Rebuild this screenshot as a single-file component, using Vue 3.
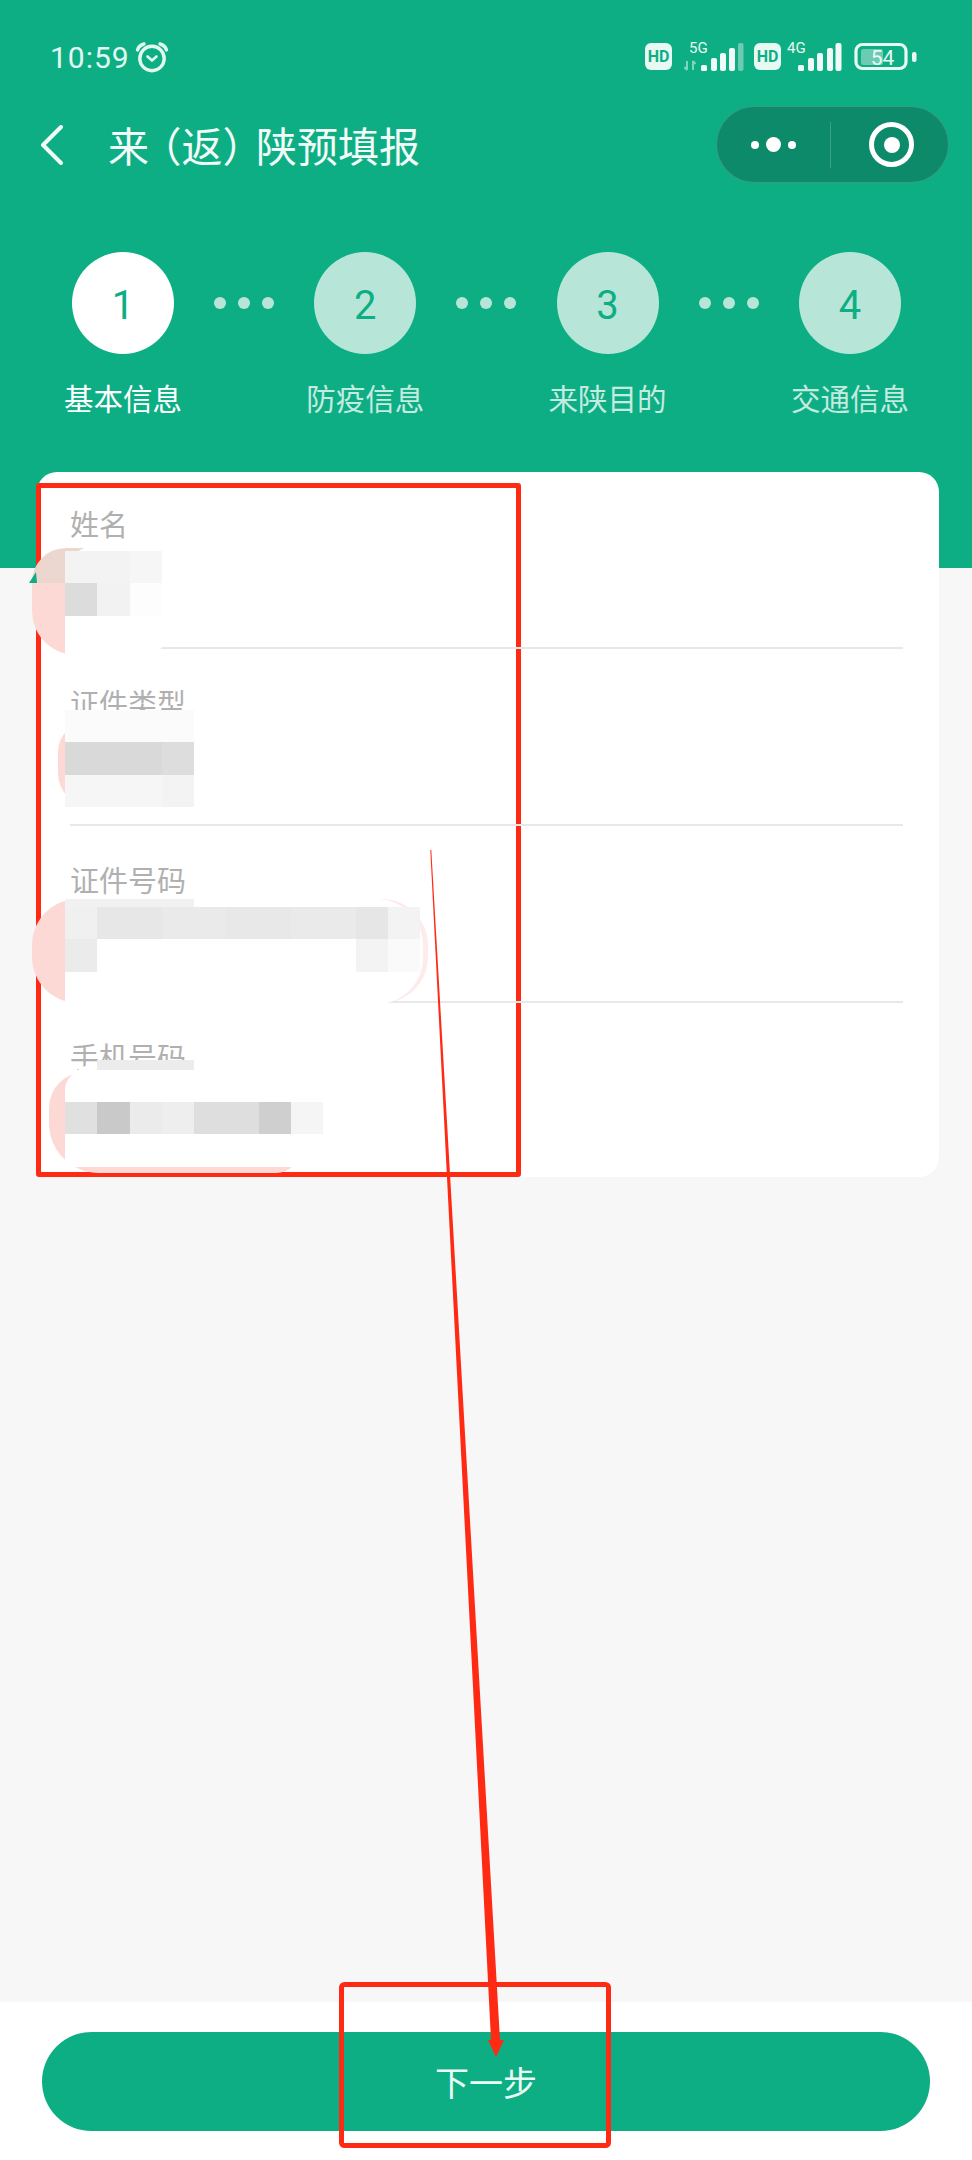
<script setup>
const steps = [
  { n: 1, label: '基本信息' },
  { n: 2, label: '防疫信息' },
  { n: 3, label: '来陕目的' },
  { n: 4, label: '交通信息' }
]

const t = 32.3

// mosaic rows laid over each field value, widths are in tiles
const fields = [
  {
    label: '姓名',
    mask: 'm1',
    rows: [
      { tiles: [['#f3f3f3', 2], ['#f6f6f6', 1]] },
      { tiles: [['#dcdcdc', 1], ['#f2f2f2', 1], ['#fdfdfd', 1]] }
    ]
  },
  {
    label: '证件类型',
    mask: 'm2',
    rows: [
      { tiles: [['#fbfbfb', 4]] },
      { tiles: [['#d9d9d9', 3], ['#dddddd', 1]] },
      { tiles: [['#f6f6f6', 3], ['#f3f3f3', 1]] }
    ]
  },
  {
    label: '证件号码',
    mask: 'm3',
    rows: [
      { h: 8, tiles: [['#f1f1f1', 4]] },
      { tiles: [['#f0f0f0', 1], ['#e7e7e7', 2], ['#eaeaea', 2], ['#e8e8e8', 2], ['#eaeaea', 2], ['#e6e6e6', 1], ['#f3f3f3', 1]] },
      { tiles: [['#ebebeb', 1], ['#ffffff', 8], ['#f3f3f3', 1], ['#fafafa', 1]] }
    ]
  },
  {
    label: '手机号码',
    mask: 'm4',
    rows: [
      { h: 10, tiles: [['transparent', 1], ['#ececec', 3]] },
      { h: 32, tiles: [] },
      { tiles: [['#e0e0e0', 1], ['#c9c9c9', 1], ['#ebebeb', 1], ['#eeeeee', 1], ['#dedede', 2], ['#cfcfcf', 1], ['#f5f5f5', 1]] }
    ]
  }
]
</script>

<template>
  <div class="page">
    <header class="header">
      <div class="status">
        <span class="time">10:59</span>
        <svg class="alarm" width="34" height="32" viewBox="0 0 34 32" fill="none" stroke="#e3f7f1" stroke-width="3.4" stroke-linecap="round" stroke-linejoin="round">
          <circle cx="17" cy="17.5" r="12.2" />
          <path d="M2.5 9 A9 9 0 0 1 9 3" />
          <path d="M25 3 A9 9 0 0 1 31.5 9" />
          <path d="M12.5 15.5 L17 19.5 L21.5 15.5" stroke-width="2.6" />
        </svg>
        <svg class="signal" width="272" height="36" viewBox="0 -3 272 36">
          <rect x="0" y="1" width="27" height="27" rx="6" fill="#e8f8f3" />
          <text x="13.5" y="20" class="hd">HD</text>
          <text x="44" y="11" class="net">5G</text>
          <path d="M42 19v9M39.5 25l2.5 3M48 28v-9M48 19l2.5 3" stroke="#7fd4bc" stroke-width="2" fill="none" />
          <rect x="56" y="23" width="6" height="6" rx="1.5" fill="#f0fbf8" />
          <rect x="66" y="16" width="6" height="13" rx="2" fill="#f0fbf8" />
          <rect x="75" y="11" width="6" height="18" rx="2" fill="#f0fbf8" />
          <rect x="84" y="6" width="6" height="23" rx="2" fill="#f0fbf8" />
          <rect x="93" y="1" width="5.5" height="28" rx="2" fill="#6ccbb1" />
          <rect x="109" y="1" width="27" height="27" rx="6" fill="#e8f8f3" />
          <text x="122.5" y="20" class="hd">HD</text>
          <text x="142" y="11" class="net">4G</text>
          <rect x="153" y="23" width="6" height="6" rx="1.5" fill="#f0fbf8" />
          <rect x="163" y="16" width="6" height="13" rx="2" fill="#f0fbf8" />
          <rect x="172" y="11" width="6" height="18" rx="2" fill="#f0fbf8" />
          <rect x="182" y="6" width="6" height="23" rx="2" fill="#f0fbf8" />
          <rect x="190.5" y="1" width="6" height="28" rx="2" fill="#f0fbf8" />
          <rect x="211" y="2.5" width="50" height="24" rx="6.5" fill="none" stroke="#e8f8f3" stroke-width="3.2" />
          <rect x="216" y="7" width="22" height="16" rx="2.5" fill="#6ccbb1" />
          <text x="237.5" y="22.5" class="batt">54</text>
          <rect x="267" y="10" width="4.5" height="10" rx="2" fill="#e8f8f3" />
        </svg>
      </div>

      <div class="nav">
        <svg class="back" width="23" height="40" viewBox="0 0 23 40" fill="none" stroke="#f2fbf8" stroke-width="4" stroke-linecap="round" stroke-linejoin="round">
          <path d="M21 2 L3 20 L21 38" />
        </svg>
        <h1 class="title">来<span class="paren-l">（</span>返<span class="paren-r">）</span>陕预填报</h1>
        <div class="capsule">
          <div class="more">
            <i class="dot"></i>
            <i class="dot big"></i>
            <i class="dot"></i>
          </div>
          <span class="sep"></span>
          <div class="target">
            <i class="core"></i>
          </div>
        </div>
      </div>

      <div class="steps">
        <template v-for="(s, i) in steps" :key="s.n">
          <div class="dots" v-if="i > 0">
            <i></i><i></i><i></i>
          </div>
          <div class="step" :class="{ active: i === 0 }">
            <div class="num">{{ s.n }}</div>
            <div class="step-label">{{ s.label }}</div>
          </div>
        </template>
      </div>
    </header>

    <section class="card">
      <div class="frame"></div>
      <div class="row" v-for="f in fields" :key="f.label">
        <div class="label">{{ f.label }}</div>
        <div class="mask" :class="f.mask">
          <div class="blob"></div>
          <div class="paper"></div>
          <div class="tiles">
            <div
              class="tile-row"
              v-for="(r, ri) in f.rows"
              :key="ri"
              :style="{ height: (r.h || t) + 'px' }"
            >
              <i
                v-for="(c, ci) in r.tiles"
                :key="ci"
                :style="{ background: c[0], width: c[1] * t + 'px' }"
              ></i>
            </div>
          </div>
        </div>
      </div>
    </section>

    <footer class="footer">
      <button class="next">下一步</button>
    </footer>

    <!-- red marks someone drew on top of the screenshot -->
    <svg class="marks" width="972" height="2160" viewBox="0 0 972 2160">
      <polygon points="29,583 36,572 37,583" fill="#0eae84" />
      <polygon points="430.3,850 431.3,850 500,2040 504,2040 496,2057 488,2040 491,2040" fill="#ff2a14" />
      <rect x="341.5" y="1984.5" width="267" height="161" rx="3" fill="none" stroke="#ff2a14" stroke-width="5" />
    </svg>
  </div>
</template>

<style scoped>
.page {
  position: relative;
  display: flex;
  flex-direction: column;
  width: 972px;
  height: 2160px;
  overflow: hidden;
  background: #f7f7f7;
  font-family: "Noto Sans CJK SC", "Liberation Sans", sans-serif;
}

.header {
  box-sizing: border-box;
  height: 568px;
  padding-top: 42px;
  background: #0eae84;
}

.status {
  display: flex;
  align-items: center;
  height: 30px;
  padding: 0 55px 0 50px;
}

.time {
  font-family: Roboto, sans-serif;
  font-size: 30px;
  letter-spacing: 1px;
  color: #e3f7f1;
}

.alarm {
  margin-left: 5px;
}

.signal {
  margin-left: auto;
}

.hd {
  font-family: Roboto, sans-serif;
  font-size: 16px;
  font-weight: 700;
  fill: #0eae84;
  text-anchor: middle;
}

.net {
  font-family: Roboto, sans-serif;
  font-size: 15px;
  fill: #e8f8f3;
}

.batt {
  font-family: Roboto, sans-serif;
  font-size: 21px;
  fill: #e8f8f3;
  text-anchor: middle;
}

.nav {
  display: flex;
  align-items: center;
  height: 77px;
  margin-top: 34px;
  padding: 0 23px 0 40px;
}

.title {
  margin: 0 0 0 45px;
  font-size: 41px;
  font-weight: 400;
  line-height: 77px;
  color: #f2fbf8;
}

/* half-width brackets, the gaps round them come from margins */
.paren-l,
.paren-r {
  font-feature-settings: "halt";
}

.paren-l {
  margin-left: 12px;
}

.paren-r {
  margin-right: 13px;
}

.capsule {
  box-sizing: border-box;
  display: flex;
  align-items: center;
  width: 233px;
  height: 77px;
  margin-left: auto;
  border: 1px solid rgba(255, 255, 255, 0.16);
  border-radius: 39px;
  background: #0c8a69;
}

.more {
  display: flex;
  flex: 1;
  align-items: center;
  justify-content: center;
  gap: 7px;
}

.dot {
  width: 8px;
  height: 8px;
  border-radius: 50%;
  background: #fff;
}

.dot.big {
  width: 15px;
  height: 15px;
}

.sep {
  width: 1px;
  height: 46px;
  background: rgba(255, 255, 255, 0.2);
}

.target {
  position: relative;
  display: flex;
  flex: 1;
  align-items: center;
  justify-content: center;
  padding-left: 4px;
}

.target::before {
  content: "";
  box-sizing: border-box;
  width: 45px;
  height: 45px;
  border: 5.5px solid #fff;
  border-radius: 50%;
}

.core {
  position: absolute;
  top: 50%;
  left: 50%;
  width: 16px;
  height: 16px;
  margin: -8px 0 0 -6px;
  border-radius: 50%;
  background: #fff;
}

.steps {
  display: flex;
  margin-top: 69px;
  padding-left: 58px;
}

.step {
  display: flex;
  flex-direction: column;
  align-items: center;
  width: 130px;
}

.num {
  width: 102px;
  height: 102px;
  border-radius: 50%;
  background: #b7e6d9;
  font-family: Roboto, sans-serif;
  font-size: 40px;
  line-height: 108px;
  text-align: center;
  color: #0eae84;
}

.step.active .num {
  background: #fff;
}

.step-label {
  margin-top: 23px;
  font-size: 29.5px;
  line-height: 40px;
  white-space: nowrap;
  color: #c4ebe0;
}

.step.active .step-label {
  color: #fff;
}

.dots {
  display: flex;
  align-items: center;
  justify-content: center;
  gap: 12px;
  width: 112.3px;
  height: 102px;
}

.dots i {
  width: 12px;
  height: 12px;
  border-radius: 50%;
  background: #b7e6d9;
}

.card {
  position: relative;
  flex: none;
  width: 902px;
  height: 705px;
  margin: -96px 0 0 37px;
  border-radius: 20px;
  background: #fff;
}

.frame {
  position: absolute;
  top: 11px;
  left: -1px;
  box-sizing: border-box;
  width: 485px;
  height: 694px;
  border: 5px solid #ff2a14;
  border-radius: 3px;
}

.row {
  position: relative;
  box-sizing: border-box;
  height: 177px;
  margin: 0 36px 0 33px;
  padding-top: 33px;
  border-bottom: 2px solid #e8e8e8;
}

.row:nth-child(2) {
  padding-top: 31px;
}

.row:last-child {
  border-bottom: 0;
}

.label {
  font-size: 29px;
  line-height: 40px;
  color: #b0b0b0;
}

.mask {
  position: absolute;
  left: -5px;
}

.blob {
  position: absolute;
  background: #fdd9d6;
}

.paper {
  position: absolute;
  inset: 0;
  background: #fff;
}

.tiles {
  position: relative;
}

.tile-row {
  display: flex;
}

.m1 {
  top: 74px;
  width: 107px;
  height: 121px;
}

.m1 .tiles {
  padding-top: 5px;
}

.m1 .blob {
  top: 2px;
  left: -33px;
  width: 70px;
  height: 107px;
  border-radius: 34px 0 0 44px;
  background: linear-gradient(#ecd6d0 35px, #fdd9d6 35px);
}

.m1 .paper {
  border-radius: 30px 34px 50px 0;
}

.m2 {
  top: 61px;
  width: 160px;
  height: 110px;
}

.m2 .blob {
  top: 12px;
  left: -7px;
  width: 40px;
  height: 85px;
  border-radius: 30px 0 0 34px;
}

.m2 .paper {
  border-radius: 50px 20px 30px 0 / 30px 20px 30px 0;
}

.m3 {
  top: 73px;
  width: 358px;
  height: 105px;
}

.m3 .blob {
  top: 0;
  left: -33px;
  width: 396px;
  height: 104px;
  border-radius: 46px;
  background: linear-gradient(90deg, #fdd9d6 50%, #feecea 100%);
}

.m3 .paper {
  border-radius: 0 46px 46px 0;
}

.m4 {
  top: 57px;
  width: 260px;
  height: 107px;
}

.m4 .blob {
  top: 12px;
  left: -16px;
  width: 251px;
  height: 101px;
  border-radius: 36px 0 24px 50px;
}

.m4 .paper {
  border-radius: 50px 24px 20px 0 / 30px 24px 20px 0;
}

.footer {
  box-sizing: border-box;
  height: 158px;
  margin-top: auto;
  padding: 30px 42px 0;
  background: #fff;
}

.next {
  display: block;
  width: 888px;
  height: 99px;
  padding: 0;
  border: 0;
  border-radius: 50px;
  background: #0eae84;
  font-family: inherit;
  font-size: 34px;
  color: #eafaf5;
}

.marks {
  position: absolute;
  top: 0;
  left: 0;
  pointer-events: none;
}
</style>
